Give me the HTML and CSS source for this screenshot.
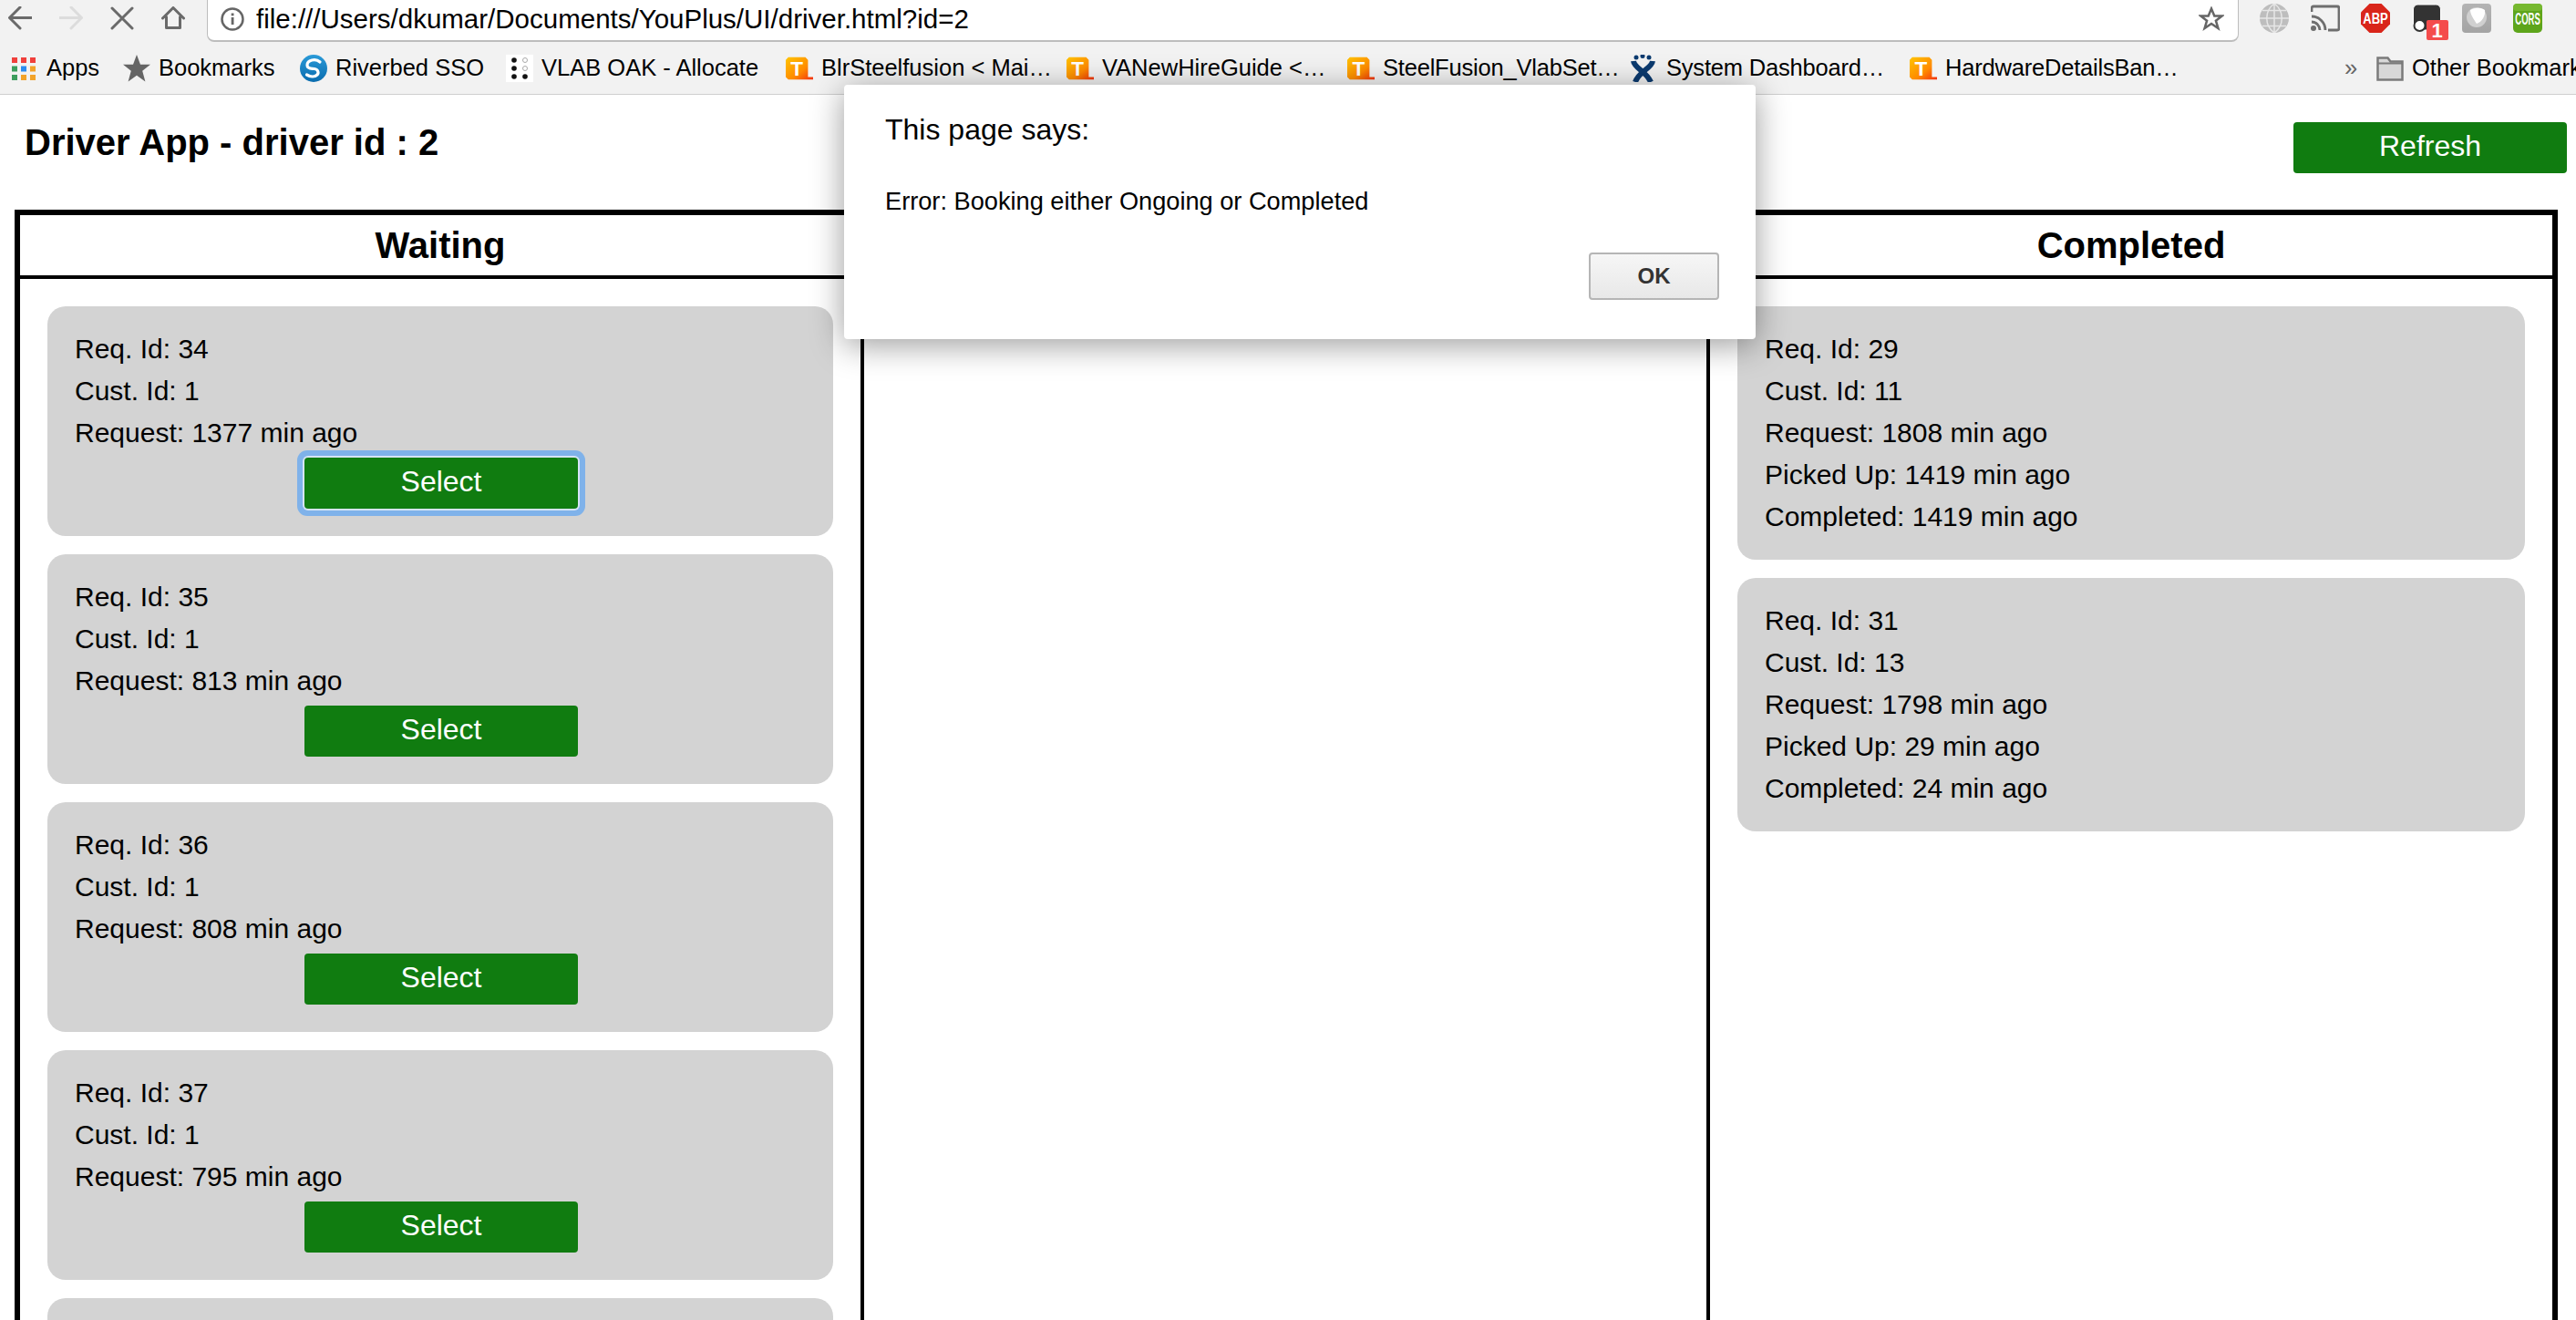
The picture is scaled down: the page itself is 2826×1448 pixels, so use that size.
FILE: index.html
```html
<!DOCTYPE html>
<html lang="en">

<head>
    <meta charset="UTF-8">
    <title>Driver App</title>
    <link rel="stylesheet" href="styles.css">
</head>

<body>
    <svg class="defs" width="0" height="0">
        <defs>
            <linearGradient id="tGrad" x1="0" y1="0" x2="1" y2="1">
                <stop offset="0" stop-color="#ffc400" />
                <stop offset="0.6" stop-color="#ff8a00" />
                <stop offset="1" stop-color="#f2300c" />
            </linearGradient>
            <symbol id="tIcon" viewBox="0 0 32 26">
                <path d="M3 0h20l3 3v20h6v3H3l-3-3V3z" fill="url(#tGrad)" />
                <text x="13" y="21" class="t-letter">T</text>
            </symbol>
        </defs>
    </svg>

    <!-- browser toolbar -->
    <div class="toolbar">
        <svg class="nav-icon" viewBox="0 0 26 26"><path d="M26 12.5H2M13 1L1.500 12.500 13 24" class="stroke-dark" /></svg>
        <svg class="nav-icon" viewBox="0 0 26 26"><path d="M0 12.500h24M13 1l11.500 11.500L13 24" class="stroke-light" /></svg>
        <svg class="nav-icon" viewBox="0 0 26 26"><path d="M2 2l22 22M24 2L2 24" class="stroke-dark" /></svg>
        <svg class="nav-icon" viewBox="0 0 26 26"><path d="M1.500 13L13 1.500 24.500 13M5.500 11.500V23.500h15V11.500" class="stroke-dark" /></svg>
        <div class="url-box">
            <svg class="info-icon" viewBox="0 0 26 26">
                <circle cx="13" cy="13" r="11.500" fill="none" stroke="#666" stroke-width="2.500" />
                <rect x="11.700" y="11" width="2.800" height="8" fill="#666" />
                <rect x="11.700" y="6.500" width="2.800" height="2.800" fill="#666" />
            </svg>
            <span class="url-text">file:///Users/dkumar/Documents/YouPlus/UI/driver.html?id=2</span>
            <svg class="url-star" viewBox="0 0 28 28"><path d="M14 2.500l3.300 8h8.300l-6.700 5.200 2.500 8.300-7.400-5-7.400 5 2.500-8.300L2.400 10.500h8.300z" fill="none" stroke="#666" stroke-width="2.500" /></svg>
        </div>
        <div class="extensions">
            <svg class="ext-icon" viewBox="0 0 32 32">
                <circle cx="16" cy="16" r="16" fill="#bdbdbd" />
                <path d="M0 16h32M3 7.500h26M3 24.500h26M16 0v32M16 0c-11 8-11 24 0 32M16 0c11 8 11 24 0 32" fill="none" stroke="#e6e6e6" stroke-width="1.500" />
            </svg>
            <svg class="ext-icon" viewBox="0 0 32 32">
                <path d="M1 9V5a2 2 0 0 1 2-2h26a2 2 0 0 1 2 2v22a2 2 0 0 1-2 2H19" fill="none" stroke="#6e6e6e" stroke-width="2.800" />
                <path d="M1 14a15 15 0 0 1 15 15M1 20a9 9 0 0 1 9 9" fill="none" stroke="#6e6e6e" stroke-width="2.800" />
                <circle cx="3" cy="27" r="3" fill="#6e6e6e" />
            </svg>
            <svg class="ext-icon" viewBox="0 0 32 32">
                <path d="M9.500 0h13L32 9.500v13L22.500 32h-13L0 22.500v-13z" fill="#d9251a" />
                <text transform="translate(16 21.500) scale(1 1.200)" class="abp-letters">ABP</text>
            </svg>
            <div class="ext-badged">
                <svg class="ext-icon" viewBox="0 0 32 32">
                    <rect x="1.500" y="1" width="30" height="28" rx="5" fill="#333" stroke="#fff" stroke-width="1" />
                    <circle cx="8.500" cy="24" r="6" fill="#fff" stroke="#333" stroke-width="2" />
                </svg>
                <span class="badge">1</span>
            </div>
            <svg class="ext-icon" viewBox="0 0 32 32">
                <defs>
                    <linearGradient id="grayGrad" x1="0" y1="0" x2="0" y2="1">
                        <stop offset="0" stop-color="#b4b4b4" />
                        <stop offset="1" stop-color="#a4a4a4" />
                    </linearGradient>
                </defs>
                <rect width="32" height="32" rx="4" fill="url(#grayGrad)" />
                <circle cx="16" cy="15" r="11" fill="#d0d0d0" />
                <path d="M9 7c5-3 12-3 16 0 1 6-3 13-9 15-3-5-7-10-7-15z" fill="#fff" />
            </svg>
            <svg class="ext-icon" viewBox="0 0 32 32">
                <rect width="32" height="32" rx="5" fill="#5ea51b" />
                <rect width="32" height="8" rx="4" fill="#76b82f" />
                <text transform="translate(16 23) scale(1 1.900)" class="cors-letters">CORS</text>
            </svg>
        </div>
    </div>

    <!-- bookmarks -->
    <div class="bookmarks">
        <a class="mark">
            <svg class="mark-icon" viewBox="0 0 30 30">
                <rect x="1" y="3" width="6" height="6" fill="#f0403c" />
                <rect x="11" y="3" width="6" height="6" fill="#f0403c" />
                <rect x="21" y="3" width="6" height="6" fill="#f0403c" />
                <rect x="1" y="12.500" width="6" height="6" fill="#3c9d5d" />
                <rect x="11" y="12.500" width="6" height="6" fill="#2b8cf0" />
                <rect x="21" y="12.500" width="6" height="6" fill="#f2a32a" />
                <rect x="1" y="22" width="6" height="6" fill="#3c9d5d" />
                <rect x="11" y="22" width="6" height="6" fill="#f2a32a" />
                <rect x="21" y="22" width="6" height="6" fill="#f2a32a" />
            </svg>
            Apps
        </a>
        <a class="mark">
            <svg class="mark-icon" viewBox="0 0 30 30"><path d="M15 0l4 10.800h11l-8.800 7 3.200 11.700L15 22.800 5.600 29.500l3.200-11.700-8.800-7h11z" fill="#656565" /></svg>
            Bookmarks
        </a>
        <a class="mark">
            <svg class="mark-icon" viewBox="0 0 30 30">
                <defs>
                    <linearGradient id="rvGrad" x1="0" y1="0" x2="0" y2="1">
                        <stop offset="0" stop-color="#2a9ad8" />
                        <stop offset="1" stop-color="#0a6cae" />
                    </linearGradient>
                </defs>
                <circle cx="15" cy="15" r="15" fill="url(#rvGrad)" />
                <path d="M22 8C17 3.500 8 6 8 11.500 8 16 13 15 16 15.500c4 .7 5 4.500 3 6.500-3 3-8 2-11.500 0" fill="none" stroke="#fff" stroke-width="3.200" stroke-linecap="round" />
            </svg>
            Riverbed SSO
        </a>
        <a class="mark">
            <svg class="mark-icon" viewBox="0 0 30 30">
                <rect width="30" height="30" fill="#fff" />
                <circle cx="9" cy="6" r="2.800" fill="#111" />
                <circle cx="9" cy="15" r="2.800" fill="#111" />
                <circle cx="9" cy="24" r="2.800" fill="#111" />
                <circle cx="21" cy="24" r="2.800" fill="#111" />
                <circle cx="21" cy="6" r="2.500" fill="none" stroke="#aaa" />
                <circle cx="21" cy="15" r="2.500" fill="none" stroke="#aaa" />
            </svg>
            VLAB OAK - Allocate
        </a>
        <a class="mark"><svg class="mark-icon"><use href="#tIcon" /></svg>BlrSteelfusion &lt; Mai…</a>
        <a class="mark"><svg class="mark-icon"><use href="#tIcon" /></svg>VANewHireGuide &lt;…</a>
        <a class="mark mark-tight"><svg class="mark-icon"><use href="#tIcon" /></svg>SteelFusion_VlabSet…</a>
        <a class="mark mark-tight">
            <svg class="mark-icon" viewBox="0 0 30 30">
                <circle cx="6" cy="3" r="2.500" fill="#0b3a6f" />
                <circle cx="13" cy="1.500" r="2.500" fill="#0b3a6f" />
                <circle cx="20" cy="3" r="2.500" fill="#0b3a6f" />
                <path d="M3 7C4 15 17 18 22 30M24 7C23 15 9 18 5 30" fill="none" stroke="#0b3a6f" stroke-width="6" />
            </svg>
            System Dashboard…
        </a>
        <a class="mark mark-tight"><svg class="mark-icon"><use href="#tIcon" /></svg>HardwareDetailsBan…</a>
        <span class="mark-more">»</span>
        <a class="mark">
            <svg class="mark-icon" viewBox="0 0 30 30"><path d="M1.500 27.500V3.500h11l3 4h13v20z" fill="#d8d8d8" stroke="#7b7b7b" stroke-width="2.500" /><path d="M1.500 9.500h27" stroke="#7b7b7b" stroke-width="2" /></svg>
            Other Bookmarks
        </a>
    </div>

    <!-- page -->
    <div class="page">
        <div class="page-head">
            <h1 class="page-title">Driver App - driver id : 2</h1>
            <button class="green-btn">Refresh</button>
        </div>

        <div class="board">
            <div class="column">
                <h2 class="column-head">Waiting</h2>
                <div class="column-body">
                    <div class="card">
                        <p>Req. Id: 34</p>
                        <p>Cust. Id: 1</p>
                        <p>Request: 1377 min ago</p>
                        <button class="green-btn card-btn focused">Select</button>
                    </div>
                    <div class="card">
                        <p>Req. Id: 35</p>
                        <p>Cust. Id: 1</p>
                        <p>Request: 813 min ago</p>
                        <button class="green-btn card-btn">Select</button>
                    </div>
                    <div class="card">
                        <p>Req. Id: 36</p>
                        <p>Cust. Id: 1</p>
                        <p>Request: 808 min ago</p>
                        <button class="green-btn card-btn">Select</button>
                    </div>
                    <div class="card">
                        <p>Req. Id: 37</p>
                        <p>Cust. Id: 1</p>
                        <p>Request: 795 min ago</p>
                        <button class="green-btn card-btn">Select</button>
                    </div>
                    <div class="card"></div>
                </div>
            </div>
            <div class="column">
                <h2 class="column-head">Ongoing</h2>
                <div class="column-body"></div>
            </div>
            <div class="column">
                <h2 class="column-head">Completed</h2>
                <div class="column-body">
                    <div class="card card-done">
                        <p>Req. Id: 29</p>
                        <p>Cust. Id: 11</p>
                        <p>Request: 1808 min ago</p>
                        <p>Picked Up: 1419 min ago</p>
                        <p>Completed: 1419 min ago</p>
                    </div>
                    <div class="card card-done">
                        <p>Req. Id: 31</p>
                        <p>Cust. Id: 13</p>
                        <p>Request: 1798 min ago</p>
                        <p>Picked Up: 29 min ago</p>
                        <p>Completed: 24 min ago</p>
                    </div>
                </div>
            </div>
        </div>
    </div>

    <!-- alert -->
    <div class="dialog">
        <div class="dialog-title">This page says:</div>
        <div class="dialog-text">Error: Booking either Ongoing or Completed</div>
        <div class="dialog-actions">
            <button class="dialog-ok">OK</button>
        </div>
    </div>
</body>

</html>
```

FILE: styles.css
```css
* {
    margin: 0;
    padding: 0;
    box-sizing: border-box;
}

html {
    height: 1448px;
    overflow: hidden;
}

body {
    height: 1448px;
    overflow: hidden;
    background-color: #fff;
    color: #000;
    font-family: "Liberation Sans", Arial, sans-serif;
}

.defs {
    position: absolute;
}

.t-letter {
    font-family: "Liberation Sans", sans-serif;
    font-size: 24px;
    font-weight: bold;
    fill: #fff;
    text-anchor: middle;
}

/* toolbar */
.toolbar {
    display: flex;
    height: 46px;
    padding-left: 9px;
    background-color: #f2f2f2;
}

.nav-icon {
    flex: none;
    width: 26px;
    height: 26px;
    margin: 7px 30px 0 0;
}

.stroke-dark,
.stroke-light {
    fill: none;
    stroke-width: 3px;
    stroke-linecap: round;
    stroke-linejoin: round;
}

.stroke-dark {
    stroke: #6a6a6a;
}

.stroke-light {
    stroke: #dcdcdc;
}

.url-box {
    display: flex;
    align-items: center;
    width: 2229px;
    margin-left: -6px;
    padding: 0 15px 2px 14px;
    background-color: #fff;
    border: 1px solid #bdbdbd;
    border-width: 0 1px 2px 1px;
    border-radius: 0 0 8px 8px;
}

.info-icon {
    flex: none;
    width: 26px;
    height: 26px;
    margin-right: 13px;
}

.url-text {
    font-size: 29.500px;
}

.url-star {
    flex: none;
    width: 28px;
    height: 28px;
    margin-left: auto;
}

.extensions {
    display: flex;
    gap: 23.500px;
    padding: 4px 0 0 23px;
}

.ext-icon {
    display: block;
    width: 32px;
    height: 32px;
}

.abp-letters,
.cors-letters {
    font-family: "Liberation Sans", sans-serif;
    font-weight: bold;
    fill: #fff;
    text-anchor: middle;
}

.abp-letters {
    font-size: 13px;
}

.cors-letters {
    font-size: 9.500px;
}

.ext-badged {
    position: relative;
}

.badge {
    position: absolute;
    left: 16px;
    top: 18px;
    width: 24px;
    height: 22px;
    background-color: #f44c4c;
    border-radius: 2px;
    color: #fff;
    font-size: 22px;
    font-weight: bold;
    line-height: 23px;
    text-align: center;
}

/* bookmarks */
.bookmarks {
    display: grid;
    grid-template-columns: 123px 194px 226px 307px 308px 308px 311px 306px 477px 35px auto;
    align-items: center;
    height: 58px;
    padding-left: 12px;
    background-color: #f2f2f2;
    border-bottom: 1px solid #cfcfcf;
    white-space: nowrap;
    font-size: 25.500px;
}

.mark {
    display: flex;
    align-items: center;
    gap: 9px;
}

.mark-tight {
    letter-spacing: -0.200px;
}

.mark-icon {
    flex: none;
    width: 30px;
    height: 30px;
}

.mark-more {
    color: #666;
}

/* page */
.page {
    padding: 0 10px 0 16px;
}

.page-head {
    display: flex;
    justify-content: space-between;
    align-items: flex-start;
    padding: 30px 0 40px 11px;
}

.page-title {
    font-size: 40px;
    line-height: 44px;
}

.green-btn {
    width: 300px;
    height: 56px;
    padding-bottom: 3px;
    background-color: #107c10;
    border: 0;
    border-radius: 4px;
    color: #fff;
    font-family: inherit;
    font-size: 32px;
}

.board {
    display: grid;
    grid-template-columns: 926px 928px 924px;
    min-height: 1300px;
    margin-right: 10px;
    border: 6px solid #000;
}

.column {
    border-right: 4px solid #000;
}

.column:last-child {
    border-right: 0;
}

.column-head {
    height: 70px;
    border-bottom: 4px solid #000;
    font-size: 40px;
    line-height: 66px;
    text-align: center;
}

.column-body {
    display: flex;
    flex-direction: column;
    gap: 20px;
    padding: 30px;
}

.card {
    height: 252px;
    padding: 24px 28px 0 30px;
    background-color: #d3d3d3;
    border-radius: 20px;
    font-size: 30px;
    line-height: 46px;
}

.card-done {
    height: 278px;
}

.card-btn {
    display: block;
    margin: 4px auto 0;
}

.focused {
    box-shadow: 0 0 0 2px #d6e4f5, 0 0 0 8px #7fb2ea;
}

/* alert */
.dialog {
    position: absolute;
    left: 926px;
    top: 93px;
    width: 1000px;
    height: 279px;
    padding: 31px 40px 43px 45px;
    background-color: #fff;
    border-radius: 4px;
    box-shadow: 0 6px 36px rgba(0, 0, 0, 0.4);
}

.dialog-title {
    font-size: 32px;
    line-height: 36px;
}

.dialog-text {
    margin-top: 46px;
    font-size: 27.200px;
    line-height: 30px;
}

.dialog-actions {
    display: flex;
    justify-content: flex-end;
    margin-top: 41px;
}

.dialog-ok {
    width: 143px;
    height: 52px;
    background: linear-gradient(#f6f6f6, #e8e8e8);
    border: 2px solid #b5b5b5;
    border-radius: 4px;
    color: #333;
    font-family: inherit;
    font-size: 24px;
    font-weight: bold;
}
```
